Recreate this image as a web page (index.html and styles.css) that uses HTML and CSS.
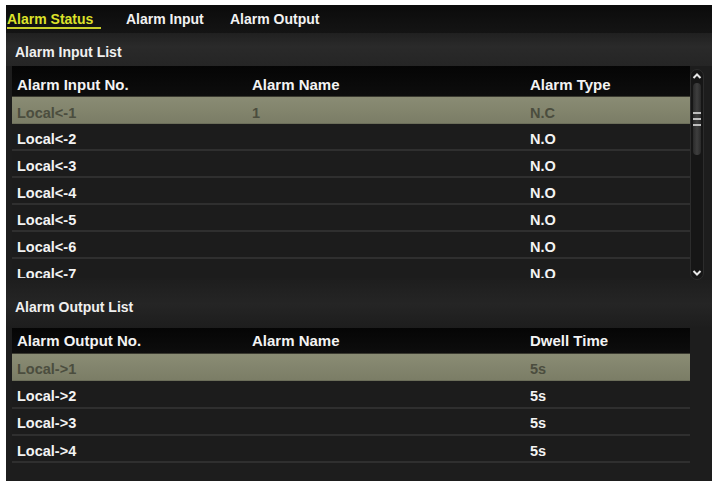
FILE: index.html
```html
<!DOCTYPE html>
<html>
<head>
<meta charset="utf-8">
<link rel="stylesheet" href="styles.css">
</head>
<body>
<div class="panel">
  <div class="tabs">
    <div class="tab active">Alarm Status</div>
    <div class="tab">Alarm Input</div>
    <div class="tab">Alarm Output</div>
  </div>

  <div class="section">Alarm Input List</div>
  <div class="tablewrap">
    <div class="table">
      <div class="row head"><span>Alarm Input No.</span><span>Alarm Name</span><span>Alarm Type</span></div>
      <div class="body in-body">
        <div class="row sel"><span>Local&lt;-1</span><span>1</span><span>N.C</span></div>
        <div class="row"><span>Local&lt;-2</span><span></span><span>N.O</span></div>
        <div class="row"><span>Local&lt;-3</span><span></span><span>N.O</span></div>
        <div class="row"><span>Local&lt;-4</span><span></span><span>N.O</span></div>
        <div class="row"><span>Local&lt;-5</span><span></span><span>N.O</span></div>
        <div class="row"><span>Local&lt;-6</span><span></span><span>N.O</span></div>
        <div class="row"><span>Local&lt;-7</span><span></span><span>N.O</span></div>
      </div>
    </div>
    <div class="scrollbar">
      <svg class="chev" width="14" height="12" viewBox="0 0 14 12"><path d="M3.5 8 L7 4.5 L10.5 8" fill="none" stroke="#e8e8e8" stroke-width="2"/></svg>
      <div class="track">
        <div class="thumb">
          <i></i><i></i><i></i>
        </div>
      </div>
      <svg class="chev" width="14" height="12" viewBox="0 0 14 12"><path d="M3.5 4 L7 7.5 L10.5 4" fill="none" stroke="#e8e8e8" stroke-width="2"/></svg>
    </div>
  </div>

  <div class="section out-label">Alarm Output List</div>
  <div class="tablewrap">
    <div class="table out">
      <div class="row head"><span>Alarm Output No.</span><span>Alarm Name</span><span>Dwell Time</span></div>
      <div class="body">
        <div class="row sel"><span>Local-&gt;1</span><span></span><span>5s</span></div>
        <div class="row"><span>Local-&gt;2</span><span></span><span>5s</span></div>
        <div class="row"><span>Local-&gt;3</span><span></span><span>5s</span></div>
        <div class="row"><span>Local-&gt;4</span><span></span><span>5s</span></div>
      </div>
    </div>
  </div>
</div>
</body>
</html>
```

FILE: styles.css
```css
* { box-sizing: border-box; }
html, body { margin: 0; padding: 0; background: #ffffff; }
body {
  width: 712px;
  height: 481px;
  overflow: hidden;
  font-family: "Liberation Sans", Arial, sans-serif;
  font-weight: bold;
}
.panel {
  margin: 5px 0 0 6px;
  width: 706px;
  height: 476px;
  background: #1d1d1d;
  display: flex;
  flex-direction: column;
}
.tabs {
  height: 28px;
  background: linear-gradient(#0b0b0b, #141414);
  display: grid;
  grid-template-columns: 119px 104px auto;
  align-items: center;
  padding-left: 1px;
}
.tab {
  font-size: 14px;
  color: #f2f2f2;
  line-height: 18px;
}
.tab.active {
  color: #dde22a;
  justify-self: start;
  padding-right: 8px;
  border-bottom: 2px solid #c9cf2a;
  line-height: 16px;
  margin-top: 2px;
}
.section {
  height: 33px;
  background: linear-gradient(#202020, #2a2a2a 40%, #252525);
  color: #f0f0f0;
  font-size: 14px;
  display: flex;
  align-items: center;
  padding-left: 9px;
  padding-top: 5px;
}
.out-label {
  height: 48px;
  padding-top: 6px;
  background: linear-gradient(#1e1e1e, #252525 50%, #1d1d1d);
}
.tablewrap {
  display: flex;
  padding-left: 6px;
}
.table {
  width: 678px;
}
.row {
  display: grid;
  grid-template-columns: 235px 278px 1fr;
  height: 27px;
  align-items: center;
  font-size: 14.5px;
  color: #f3f3f3;
  background: #1c1c1c;
  border-bottom: 2px solid #2f2f2f;
  padding-top: 5px;
}
.row span { padding-left: 5px; white-space: nowrap; }
.row.head {
  height: 31px;
  background: linear-gradient(#050505, #0d0d0d);
  border-bottom: 1px solid #3a3a30;
  font-size: 15px;
  padding-top: 7px;
}
.out .row.head { height: 26px; padding-top: 0; }
.out .body .row { height: 27.3px; padding-top: 4px; }
.row.sel {
  background: linear-gradient(#8a8c74, #7b7d66);
  color: #4b4d3e;
  border-bottom: 1px solid #6c6e5a;
}
.in-body {
  height: 181px;
  overflow: hidden;
}
.scrollbar {
  width: 14px;
  margin-top: 3px;
  height: 211px;
  display: flex;
  flex-direction: column;
  align-items: center;
  background: #161616;
  border-radius: 7px;
  border: 1px solid #2c2c2c;
}
.chev { display: block; flex: none; }
.track {
  flex: 1;
  width: 8px;
  display: flex;
  flex-direction: column;
}
.thumb {
  margin-top: 1px;
  height: 72px;
  background: linear-gradient(90deg, #2a2a2a, #3e3e3e, #2a2a2a);
  border-radius: 4px;
  display: flex;
  flex-direction: column;
  align-items: center;
  justify-content: center;
  gap: 4px;
}
.thumb i {
  display: block;
  width: 8px;
  height: 2px;
  background: #bdbdbd;
}
```
